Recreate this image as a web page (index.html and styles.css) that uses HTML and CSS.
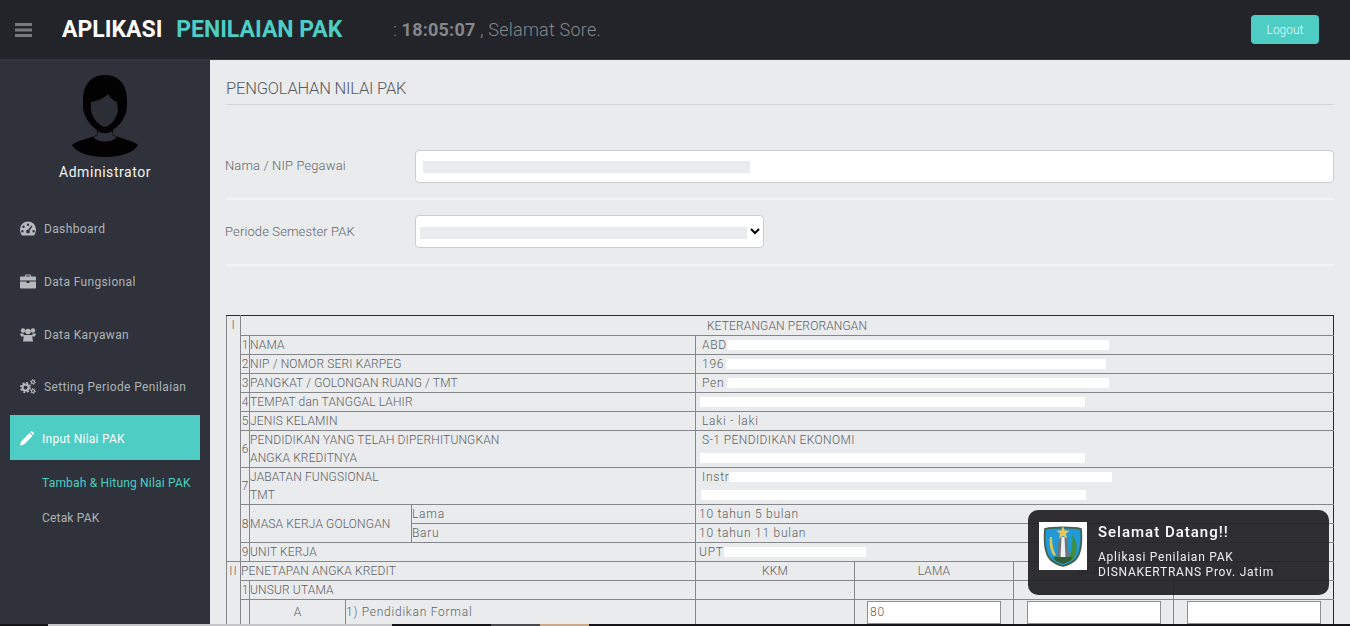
FILE: index.html
```html
<!DOCTYPE html>
<html lang="id">
<head>
<meta charset="utf-8">
<title>Aplikasi Penilaian PAK</title>
<link rel="stylesheet" href="styles.css">
</head>
<body>
<div class="app">
  <header class="topbar">
    <svg class="burger" viewBox="0 0 17 14"><rect width="17" height="3"/><rect y="5.5" width="17" height="3"/><rect y="11" width="17" height="3"/></svg>
    <div class="brand">APLIKASI <span class="brand-accent">PENILAIAN PAK</span></div>
    <div class="clock">: <b>18:05:07</b> , Selamat Sore.</div>
    <a class="logout">Logout</a>
  </header>

  <aside class="sidebar">
    <svg class="avatar" viewBox="0 0 70 82">
      <path fill="#020203" d="M35 0C20 0 13 11 13 25c0 7 0 13 3 17 2 6 8 11 11 13v5C20 63 6 66 2 70c4 8 18 12 33 12s29-4 33-12c-4-4-18-7-25-10v-5c3-2 9-7 11-13 3-4 3-10 3-17C57 11 50 0 35 0Z"/>
      <path fill="#2c2e36" d="M21 27c6-1 12-3 17-8 2 4 6 7 9 8l1 8c-1 8-7 16-13 17-6-1-13-9-14-17Z"/>
      <path fill="#2f323a" d="M28 56c3 3 11 3 14 0l1 5 4 1c-5 6-19 6-24 0l4-1Z"/>
    </svg>
    <div class="username">Administrator</div>
    <nav class="menu">
      <a class="menu-item">
        <svg class="ico" viewBox="0 0 16 14"><path fill-rule="evenodd" d="M8 0a8 8 0 0 1 8 8c0 2.400-.8 4.400-2 6H2C.8 12.400 0 10.400 0 8a8 8 0 0 1 8-8ZM8 2a1.200 1.200 0 1 0 0 2.400A1.200 1.200 0 0 0 8 2ZM3.500 4a1.200 1.200 0 1 0 0 2.400A1.200 1.200 0 0 0 3.500 4ZM2.400 8.500a1.200 1.200 0 1 0 0 2.400 1.200 1.200 0 0 0 0-2.400ZM13.600 8.500a1.200 1.200 0 1 0 0 2.400 1.200 1.200 0 0 0 0-2.400ZM11.500 4 8.200 8.300a1.800 1.800 0 1 0 1.300.9L12.500 4.700Z"/></svg>
        Dashboard
      </a>
      <a class="menu-item">
        <svg class="ico" viewBox="0 0 16 14"><path d="M5 2V1a1 1 0 0 1 1-1h4a1 1 0 0 1 1 1v1h4a1 1 0 0 1 1 1v3H0V3a1 1 0 0 1 1-1ZM6 2h4V1H6ZM0 7h6.500v1.500h3V7H16v6a1 1 0 0 1-1 1H1a1 1 0 0 1-1-1Z"/></svg>
        Data Fungsional
      </a>
      <a class="menu-item">
        <svg class="ico" viewBox="0 0 16 14"><circle cx="3" cy="3" r="2.200"/><circle cx="13" cy="3" r="2.200"/><circle cx="8" cy="4" r="2.800"/><path d="M0 6h3.500l.5 3H1ZM16 6h-3.500l-.5 3h3ZM4 7.500h8L13 14H3Z"/></svg>
        Data Karyawan
      </a>
      <a class="menu-item">
        <svg class="ico" viewBox="0 0 16 15">
          <circle class="gear" cx="5.500" cy="8.500" r="3" stroke-width="2"/>
          <circle class="teeth" cx="5.500" cy="8.500" r="4.700" stroke-width="1.600"/>
          <circle class="gear" cx="13" cy="3" r="1.500" stroke-width="1.200"/>
          <circle class="teeth small" cx="13" cy="3" r="2.500" stroke-width="1"/>
          <circle class="gear" cx="13" cy="12" r="1.500" stroke-width="1.200"/>
          <circle class="teeth small" cx="13" cy="12" r="2.500" stroke-width="1"/>
        </svg>
        Setting Periode Penilaian
      </a>
      <a class="menu-item active">
        <svg class="ico" viewBox="0 0 14 14"><path d="M0 14l1-4L9.500 1.500l3 3L4 13ZM10.300.7 11 0a1 1 0 0 1 1.400 0L14 1.600A1 1 0 0 1 14 3l-.7.7Z"/></svg>
        Input Nilai PAK
      </a>
      <a class="sub-item current">Tambah &amp; Hitung Nilai PAK</a>
      <a class="sub-item">Cetak PAK</a>
    </nav>
  </aside>

  <main class="content">
    <h1 class="page-title">PENGOLAHAN NILAI PAK</h1>
    <div class="form-row first">
      <label class="form-label">Nama / NIP Pegawai</label>
      <div class="text-field"><span class="mask-grey"></span></div>
    </div>
    <div class="form-row">
      <label class="form-label">Periode Semester PAK</label>
      <div class="select-wrap">
        <select class="select-field"><option></option></select>
        <span class="mask-select"></span>
      </div>
    </div>

    <table class="pak">
      <colgroup>
        <col class="c-roman"><col class="c-no"><col class="c-a"><col class="c-b"><col class="c-c">
        <col class="c-d"><col class="c-d"><col class="c-e"><col class="c-e">
      </colgroup>
      <tr class="head-row">
        <td class="roman" rowspan="11">I</td>
        <td class="center" colspan="8">KETERANGAN PERORANGAN</td>
      </tr>
      <tr><td class="no">1</td><td colspan="3">NAMA</td><td class="val" colspan="4">ABD<span class="bar b-name"></span></td></tr>
      <tr><td class="no">2</td><td colspan="3">NIP / NOMOR SERI KARPEG</td><td class="val" colspan="4">196<span class="bar b-nip"></span></td></tr>
      <tr><td class="no">3</td><td colspan="3">PANGKAT / GOLONGAN RUANG / TMT</td><td class="val" colspan="4">Pen<span class="bar b-pen"></span></td></tr>
      <tr><td class="no">4</td><td colspan="3">TEMPAT dan TANGGAL LAHIR</td><td class="val-tight" colspan="4"><span class="bar b-full nudge"></span></td></tr>
      <tr><td class="no">5</td><td colspan="3">JENIS KELAMIN</td><td class="val" colspan="4">Laki - laki</td></tr>
      <tr class="double"><td class="no">6</td><td colspan="3">PENDIDIKAN YANG TELAH DIPERHITUNGKAN<br>ANGKA KREDITNYA</td><td class="val" colspan="4"><span class="edu">S-1 PENDIDIKAN EKONOMI</span><br><span class="bar b-full pull"></span></td></tr>
      <tr class="double"><td class="no">7</td><td colspan="3">JABATAN FUNGSIONAL<br>TMT</td><td class="val" colspan="4">Instr<span class="bar b-jab"></span><br><span class="bar b-full pull-one"></span></td></tr>
      <tr><td class="no" rowspan="2">8</td><td colspan="2" rowspan="2">MASA KERJA GOLONGAN</td><td class="lc">Lama</td><td class="val-tight" colspan="4">10 tahun 5 bulan</td></tr>
      <tr><td class="lc">Baru</td><td class="val-tight" colspan="4">10 tahun 11 bulan</td></tr>
      <tr><td class="no">9</td><td colspan="3">UNIT KERJA</td><td class="val-tight" colspan="4">UPT<span class="bar b-unit"></span></td></tr>
      <tr>
        <td class="roman" rowspan="3">II</td>
        <td colspan="4">PENETAPAN ANGKA KREDIT</td>
        <td class="center">KKM</td><td class="center">LAMA</td><td class="center">BARU</td><td class="center">JUMLAH</td>
      </tr>
      <tr><td class="no">1</td><td colspan="3">UNSUR UTAMA</td><td></td><td></td><td></td><td></td></tr>
      <tr class="input-row">
        <td></td>
        <td class="center">A</td>
        <td class="lc" colspan="2">1) Pendidikan Formal</td>
        <td></td>
        <td class="center"><input class="score" value="80"></td>
        <td class="center"><input class="score"></td>
        <td class="center"><input class="score"></td>
      </tr>
    </table>
  </main>

  <div class="taskstrip"><i class="t1"></i><i class="t2"></i><i class="t3"></i><i class="t4"></i><i class="t5"></i><i class="t6"></i></div>
</div>

<div class="toast">
  <div class="toast-logo">
    <svg viewBox="0 0 44 44">
      <path fill="#1f9ad6" stroke="#46604a" stroke-width="1.800" d="M4 5C12 3 32 3 40 5c1 12 0 24-5 30-4 4-9 6-13 7-4-1-9-3-13-7C4 29 3 17 4 5Z"/>
      <path fill="#3f8f3c" d="M31 11c6 6 6 18 1 24-3 2-6 3-10 4-4-1-7-2-10-4l4-3h12c3-5 4-13 3-21Z"/>
      <path fill="#d9c45a" d="M9 13c-1 7 0 14 4 19l2-1c-3-5-4-12-4-18Z"/>
      <path fill="#2e5f38" d="M12 33h20l-3 4-7 3-7-3Z"/>
      <path fill="#6f7478" d="M18 13h8l2 20H16Z"/>
      <path fill="#eceff0" d="M20.500 13h3l1 20h-5Z"/>
      <path fill="#e9c75a" d="m22 2 1.800 4.500 4.700.3-3.600 3 1.200 4.600-4.100-2.600-4.100 2.600 1.200-4.600-3.600-3 4.700-.3Z"/>
    </svg>
  </div>
  <div class="toast-body">
    <div class="toast-title">Selamat Datang!!</div>
    <div class="toast-text">Aplikasi Penilaian PAK<br>DISNAKERTRANS Prov. Jatim</div>
  </div>
</div>
</body>
</html>
```
FILE: styles.css
```css
* { box-sizing: border-box; }
html, body { margin: 0; height: 626px; overflow: hidden; }
body { font-family: Roboto, "Liberation Sans", sans-serif; background: #e9ebed; color: #6b6d70; }

.app {
  display: grid;
  grid-template-columns: 210px 1fr;
  grid-template-rows: 60px 564px 2px;
  height: 626px;
}

/* top bar */
.topbar {
  grid-column: 1 / 3;
  display: flex;
  align-items: center;
  background: #222429;
  border-bottom: 1px solid #2e3a42;
  padding: 0 31px 0 15px;
}
.burger { width: 17px; height: 14px; fill: #77797c; margin: 0 30px 0 0; }
.brand { font-size: 23px; font-weight: 700; color: #fff; width: 331px; font-family: Roboto, sans-serif; }
.brand-accent { color: #4ecdc4; margin-left: 8px; }
.clock { font-size: 18px; color: #85878b; font-weight: 300; letter-spacing: .22px; }
.clock b { font-weight: 700; }
.logout {
  margin-left: auto; width: 68px; height: 29px; border-radius: 4px;
  background: #4ecdc4; color: #e6fbf9; font-size: 12px;
  display: flex; align-items: center; justify-content: center; font-weight: 300;
}

/* side bar */
.sidebar { grid-row: 2; background: #2f323a; display: flex; flex-direction: column; align-items: stretch; padding-top: 15px; overflow: hidden; }
.avatar { width: 70px; height: 82px; align-self: center; flex: none; }
.username { text-align: center; color: #f2f2f2; font-size: 14px; letter-spacing: .55px; margin-top: 6px; line-height: 18px; }
.menu { display: flex; flex-direction: column; margin-top: 21px; }
.menu-item {
  height: 53px; display: flex; align-items: center; gap: 8px; padding: 0 10px 0 20px;
  color: #aeb2b7; font-size: 12px; letter-spacing: .36px; font-weight: 400;
}
.menu-item:nth-child(4) { margin-top: -1px; margin-bottom: 2px; }
.ico { width: 16px; height: 15px; fill: #b6b9bd; flex: none; }
.gear { fill: none; stroke: #b6b9bd; }
.teeth { fill: none; stroke: #b6b9bd; stroke-dasharray: 2 1.700; }
.teeth.small { stroke-dasharray: 1.200 1.400; }
.menu-item.active {
  margin: 0 10px; height: 45px; background: #4ecdc4; color: #fff; padding: 2px 0 0 10px; letter-spacing: .25px;
}
.menu-item.active .ico { fill: #fff; width: 14px; }
.sub-item { height: 35px; display: flex; align-items: center; padding-left: 42px; color: #aeb2b7; font-size: 12px; letter-spacing: .18px; }
.sub-item.current { color: #4ecdc4; margin-top: 5px; }

/* content */
.content { padding: 0 16px 0 15px; overflow: hidden; min-width: 0; }
.page-title {
  margin: 0 0 0 1px; height: 45px; padding-top: 18px; line-height: 22px;
  font-size: 16.500px; font-weight: 300; color: #595b5f; letter-spacing: -.2px;
  border-bottom: 1px solid #d2d4d6;
}
.form-row { display: flex; align-items: center; height: 66px; border-bottom: 2px solid #f0f2f3; padding-top: 1px; }
.form-row.first { margin-top: 29px; }
.form-label { width: 190px; flex: none; font-size: 13px; font-weight: 300; letter-spacing: .12px; color: #66686c; margin-top: -2px; }
.text-field {
  flex: 1; height: 33px; background: #fff; border: 1px solid #ccc; border-radius: 4px;
  display: flex; align-items: center; padding-left: 7px;
}
.mask-grey { width: 327px; height: 12px; background: #e9ebed; }
.select-wrap { position: relative; width: 349px; height: 33px; margin-bottom: 2px; }
.select-field { width: 100%; height: 100%; background: #fff; border: 1px solid #ccc; border-radius: 4px; }
.mask-select { position: absolute; left: 5px; top: 12px; width: 327px; height: 12px; background: #e9ebed; }

/* table */
.pak {
  margin: 49px 0 0 1px; width: 1107px; table-layout: fixed; border-collapse: collapse;
  font-size: 12px; font-weight: 300; letter-spacing: .15px; color: #5f6164;
  border-top: 1px solid #2a2a2a; border-right: 1px solid #2a2a2a; border-left: 1px solid #555;
}
.c-roman { width: 14px; } .c-no { width: 9px; } .c-a { width: 96px; } .c-b { width: 66px; }
.c-c { width: 284px; } .c-d { width: 159px; } .c-e { width: 160px; }
.pak td { border: 1px solid #85878a; padding: 0; height: 19px; line-height: 18px; white-space: nowrap; overflow: hidden; }
.pak tr.head-row td { border-top-color: #2a2a2a; height: 20px; }
.pak td:last-child { border-right-color: #2a2a2a; }
.pak .no { text-align: center; letter-spacing: 0; }
.pak .roman { text-align: center; vertical-align: top; letter-spacing: 1px; }
.pak .center { text-align: center; }
.pak .lc { letter-spacing: .75px; }
.pak .val { padding-left: 6px; letter-spacing: .75px; }
.pak .val-tight { padding-left: 3px; letter-spacing: .75px; }
.edu { letter-spacing: .4px; }
.double td { height: 37px; }
.pak .input-row td { height: 25px; vertical-align: middle; }
.score {
  display: block; margin: 0 auto; width: 134px; height: 23px; background: #fff; padding: 0 2px;
  border: 1px solid #8e9093; font: 300 12px Roboto, sans-serif; letter-spacing: .75px; color: #5f6164;
}

.bar { display: inline-block; height: 10px; background: #fff; vertical-align: -1px; }
.b-name { width: 382px; }
.b-nip { width: 380px; margin-left: 2px; }
.b-pen { width: 382px; margin-left: 3px; }
.b-full { width: 385px; }
.b-jab { width: 383px; margin-left: -1px; }
.b-unit { width: 142px; border-radius: 2px; }
.nudge { margin-left: 1px; }
.pull { margin-left: -2px; }
.pull-one { margin-left: -1px; }

/* strip along the bottom edge */
.taskstrip { grid-column: 1 / 3; display: flex; height: 2px; }
.taskstrip i { display: block; height: 2px; }
.t1 { width: 48px; background: #141416; }
.t2 { width: 344px; background: #c4c6c8; }
.t3 { width: 99px; background: #141416; }
.t4 { width: 49px; background: #4a4a4c; }
.t5 { width: 49px; background: #c9a98a; }
.t6 { flex: 1; background: #141416; }

/* toast */
.toast {
  position: fixed; left: 1028px; top: 510px; width: 301px; height: 85px;
  background: rgba(32, 32, 34, .93); border-radius: 10px; color: #fff;
  display: flex; padding: 12px 11px;
}
.toast-logo { width: 48px; height: 48px; background: #fff; flex: none; padding: 2px; }
.toast-logo svg { display: block; width: 44px; height: 44px; }
.toast-body { margin-left: 11px; }
.toast-title { font-size: 15px; letter-spacing: 1px; line-height: 20px; font-weight: 500; }
.toast-text { font-size: 12px; letter-spacing: .75px; line-height: 15px; margin-top: 8px; color: #eee; }
```
